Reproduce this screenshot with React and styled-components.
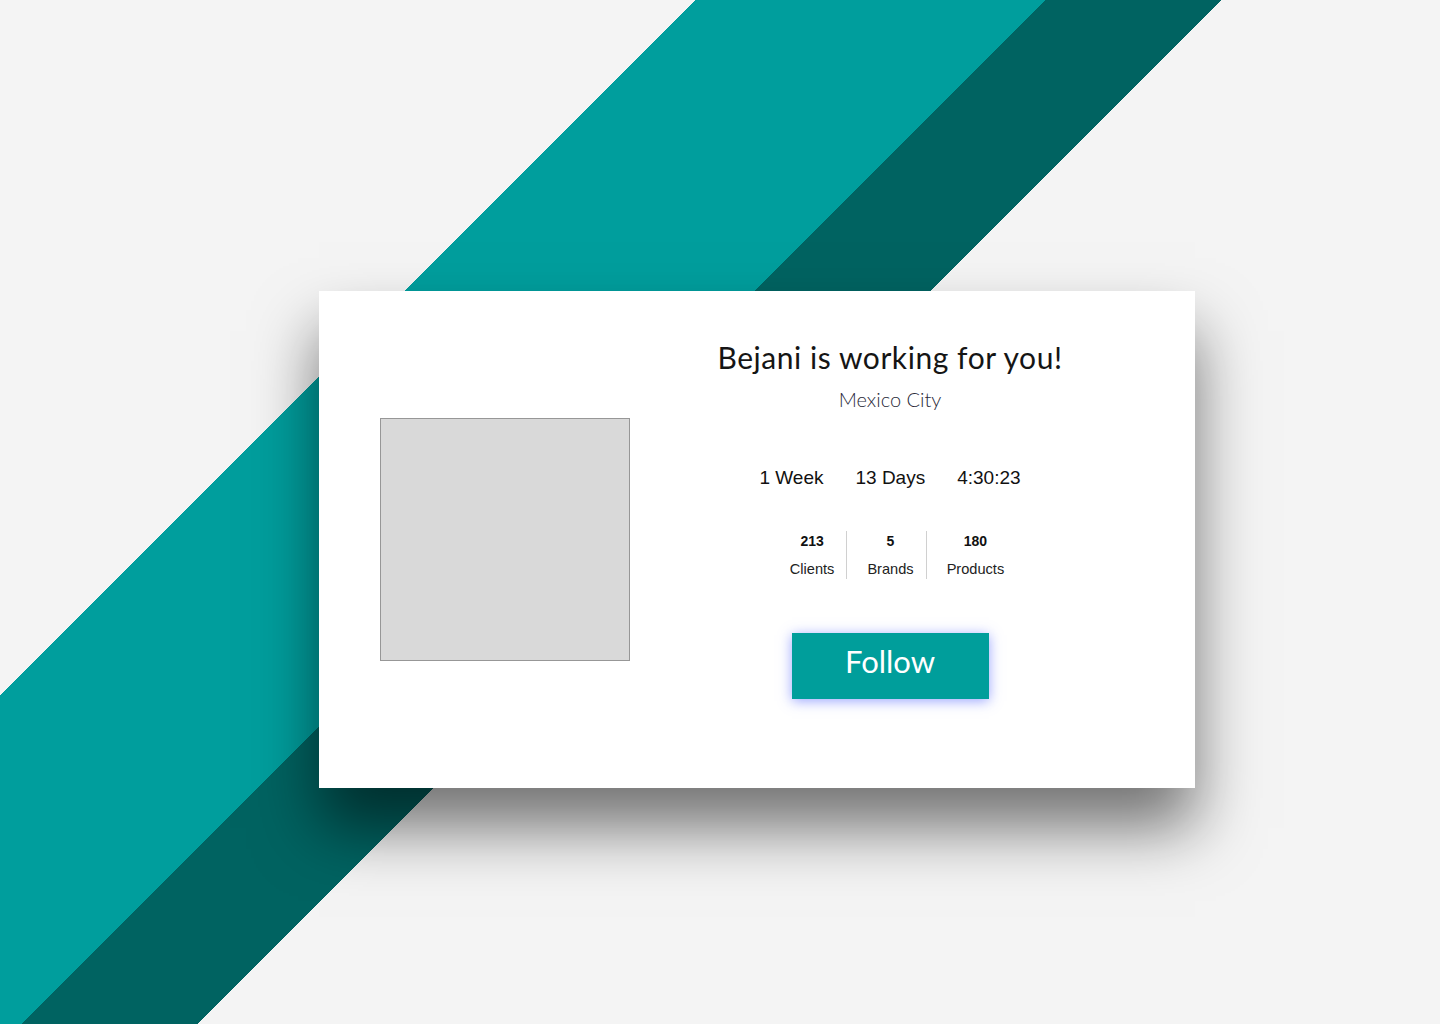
import React from 'react';
import styled, { createGlobalStyle } from 'styled-components';

const Global = createGlobalStyle`
    html, body {
        margin: 0;
        padding: 0;
    }
`

const stats = [
    { value: '213', label: 'Clients' },
    { value: '5', label: 'Brands' },
    { value: '180', label: 'Products' },
];

const App = () => {
    return (
        <Page>
            <Global />
            <Card>
                <Photo />
                <Info>
                    <Title>Bejani is working for you!</Title>
                    <City>Mexico City</City>
                    <Timer>
                        <span>1 Week</span>
                        <span>13 Days</span>
                        <span>4:30:23</span>
                    </Timer>
                    <Stats>
                        {stats.map(s => (
                            <Stat key={s.label}>
                                <Value>{s.value}</Value>
                                <Label>{s.label}</Label>
                            </Stat>
                        ))}
                    </Stats>
                    <Button>Follow</Button>
                </Info>
            </Card>
        </Page>
    );
}

const Page = styled.div`
    width: 100%;
    min-height: 100vh;
    box-sizing: border-box;
    padding: 291px 0 0 319px;
    background: linear-gradient(
        135deg,
        #f4f4f4 491.5px,
        #009e9d 491.5px,
        #009e9d 739px,
        #006361 739px,
        #006361 864px,
        #f4f4f4 864px
    );
`

const Card = styled.div`
    width: 876px;
    height: 497px;
    box-sizing: border-box;
    background: #fff;
    box-shadow: 0 40px 60px rgba(0, 0, 0, 0.53);
    display: grid;
    grid-template-columns: 250px 1fr;
    align-items: center;
    padding: 0 45px 0 61px;
`

const Photo = styled.div`
    width: 250px;
    height: 243px;
    box-sizing: border-box;
    background: #d9d9d9;
    border: 1px solid #979797;
`

const Info = styled.div`
    align-self: start;
    display: flex;
    flex-direction: column;
    align-items: center;
    padding-top: 48px;
    font-family: "Liberation Sans", Arial, sans-serif;
    color: #1a1a1a;
`

const Title = styled.h1`
    margin: 0;
    font-family: Lato, "Noto Sans", sans-serif;
    font-weight: 400;
    font-size: 30px;
    line-height: 36px;
    letter-spacing: 0.55px;
    color: #151515;
`

const City = styled.div`
    margin-top: 12px;
    font-family: Lato, "Noto Sans", sans-serif;
    font-weight: 300;
    font-size: 20px;
    line-height: 24px;
    color: #2a2a3a;
`

const Timer = styled.div`
    margin-top: 55px;
    display: flex;
    gap: 32px;
    font-size: 19px;
    line-height: 24px;
    color: #111;
`

const Stats = styled.div`
    margin: 41px 0 0 5px;
    display: flex;
`

const Stat = styled.div`
    display: flex;
    flex-direction: column;
    align-items: center;
    gap: 8px;
    padding: 0 12px 0 21px;

    & + & {
        border-left: 1px solid #d0d0d0;
        padding-left: 20px;
    }
`

const Value = styled.div`
    font-size: 14px;
    line-height: 20px;
    font-weight: 700;
    color: #111;
`

const Label = styled.div`
    font-size: 14.6px;
    line-height: 20px;
    color: #222;
`

const Button = styled.button`
    margin-top: 54px;
    width: 197px;
    height: 66px;
    padding: 0 0 10px;
    border: none;
    background: #009e9b;
    color: #fff;
    font-family: Lato, "Noto Sans", sans-serif;
    font-size: 31px;
    font-weight: 400;
    cursor: pointer;
    box-shadow: 0 2px 12px rgba(70, 90, 255, 0.55);
`

export default App;
